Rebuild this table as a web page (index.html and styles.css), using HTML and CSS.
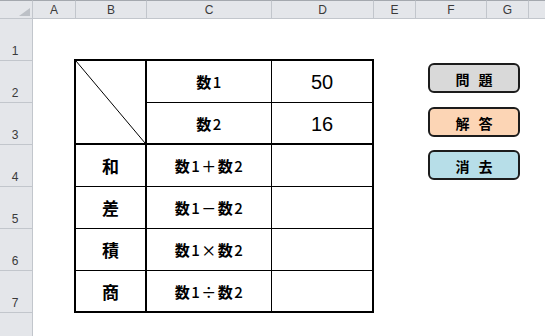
FILE: index.html
```html
<!DOCTYPE html>
<html lang="ja">
<head>
<meta charset="utf-8">
<link rel="stylesheet" href="styles.css">
</head>
<body>
<div class="sheet">
  <div class="corner"><span class="tri"></span></div>
  <div class="ch">A</div>
  <div class="ch">B</div>
  <div class="ch">C</div>
  <div class="ch">D</div>
  <div class="ch">E</div>
  <div class="ch">F</div>
  <div class="ch">G</div>
  <div class="ch last"></div>

  <div class="rh">1</div>
  <div class="rh">2</div>
  <div class="rh">3</div>
  <div class="rh">4</div>
  <div class="rh">5</div>
  <div class="rh">6</div>
  <div class="rh">7</div>
  <div class="rh last"></div>

  <div class="tbl">
    <div class="cell b diag thick-b">
      <svg class="diag-line" viewBox="0 0 100 100" preserveAspectRatio="none"><line x1="0" y1="0" x2="100" y2="100" stroke="#000" stroke-width="1" vector-effect="non-scaling-stroke"/></svg>
    </div>
    <div class="cell c lbl">数<span class="dg">1</span></div>
    <div class="cell d num">50</div>
    <div class="cell c lbl thick-b">数<span class="dg">2</span></div>
    <div class="cell d num thick-b">16</div>

    <div class="cell b op">和</div>
    <div class="cell c lbl">数<span class="dg">1</span><span class="dg">＋</span>数<span class="dg">2</span></div>
    <div class="cell d"></div>

    <div class="cell b op">差</div>
    <div class="cell c lbl">数<span class="dg">1</span><span class="dg">－</span>数<span class="dg">2</span></div>
    <div class="cell d"></div>

    <div class="cell b op">積</div>
    <div class="cell c lbl">数<span class="dg">1</span><span class="dg">×</span>数<span class="dg">2</span></div>
    <div class="cell d"></div>

    <div class="cell b op lastrow">商</div>
    <div class="cell c lbl lastrow">数<span class="dg">1</span><span class="dg">÷</span>数<span class="dg">2</span></div>
    <div class="cell d lastrow"></div>
  </div>

  <div class="shapes">
    <div class="btn gray">問 題</div>
    <div class="btn peach">解 答</div>
    <div class="btn blue">消 去</div>
  </div>
</div>
</body>
</html>
```

FILE: styles.css
```css
html, body {
  margin: 0;
  padding: 0;
  background: #fff;
}
body {
  width: 545px;
  height: 336px;
  overflow: hidden;
}
.sheet {
  display: grid;
  grid-template-columns: 33px 43px 71px 125px 102px 42px 71px 42px 1fr;
  grid-template-rows: 19px repeat(7, 42px) 1fr;
  width: 545px;
  height: 336px;
  font-family: "Liberation Sans", "Noto Sans CJK JP", sans-serif;
}
.corner, .ch, .rh {
  background: #e4e6ea;
  box-sizing: border-box;
  color: #3a3a3a;
  font-size: 12px;
}
.corner {
  grid-row: 1;
  grid-column: 1;
  border-top: 1px solid #a4a8ae;
  border-right: 1px solid #c2c6cc;
  border-bottom: 1px solid #c2c6cc;
  display: flex;
  justify-content: flex-end;
  align-items: flex-end;
  padding: 0 2px 2px 0;
}
.tri {
  width: 0;
  height: 0;
  border-left: 11px solid transparent;
  border-bottom: 8px solid #bcc0c6;
}
.ch {
  grid-row: 1;
  border-top: 1px solid #a4a8ae;
  border-right: 1px solid #c2c6cc;
  border-bottom: 1px solid #c2c6cc;
  display: flex;
  align-items: center;
  justify-content: center;
  padding-top: 1px;
}
.ch.last {
  border-right: none;
}
.rh {
  grid-column: 1;
  border-right: 1px solid #c2c6cc;
  border-bottom: 1px solid #c2c6cc;
  display: flex;
  align-items: flex-end;
  justify-content: center;
  padding-bottom: 2px;
  padding-right: 2px;
}
.rh.last {
  border-bottom: none;
}

/* table */
.tbl {
  grid-column: 3 / 6;
  grid-row: 3 / 9;
  justify-self: start;
  align-self: start;
  margin-left: -2px;
  margin-top: -2px;
  width: 300px;
  height: 254px;
  box-sizing: border-box;
  border: 2px solid #000;
  display: grid;
  grid-template-columns: 71px 125px 100px;
  grid-template-rows: 42px 42px 42px 42px 42px 40px;
  font-family: "Noto Sans CJK JP", sans-serif;
  color: #000;
}
.cell {
  box-sizing: border-box;
  border-bottom: 1px solid #000;
  display: flex;
  align-items: center;
  justify-content: center;
}
.cell.b {
  border-right: 2px solid #000;
}
.cell.c {
  border-right: 1px solid #000;
}
.cell.thick-b {
  border-bottom: 2px solid #000;
}
.cell.lastrow {
  border-bottom: none;
}
.cell.diag {
  grid-row: 1 / 3;
  padding: 0;
  align-items: stretch;
  justify-content: stretch;
}
.diag-line {
  display: block;
  width: 100%;
  height: 100%;
}
.lbl {
  font-size: 15px;
  font-weight: 700;
  letter-spacing: 1.5px;
  padding-left: 1px;
}
.dg {
  font-weight: 500;
}
.op {
  font-size: 17px;
  font-weight: 700;
}
.num {
  font-family: "Liberation Sans", sans-serif;
  font-size: 20px;
  padding-top: 2px;
}

/* shapes */
.shapes {
  grid-column: 7 / 10;
  grid-row: 3 / 6;
  display: flex;
  flex-direction: column;
  gap: 13.5px;
  padding: 2px 0 0 12px;
}
.btn {
  width: 92px;
  height: 30px;
  box-sizing: border-box;
  border: 2px solid #1c1c1c;
  border-radius: 6px;
  display: flex;
  align-items: center;
  justify-content: center;
  font-family: "Noto Sans CJK JP", sans-serif;
  font-size: 14px;
  font-weight: 700;
  word-spacing: 6px;
  color: #000;
  padding-top: 2px;
}
.gray { background: #d9d9d9; }
.peach { background: #fcd5b5; }
.blue { background: #b7dee8; }
```
